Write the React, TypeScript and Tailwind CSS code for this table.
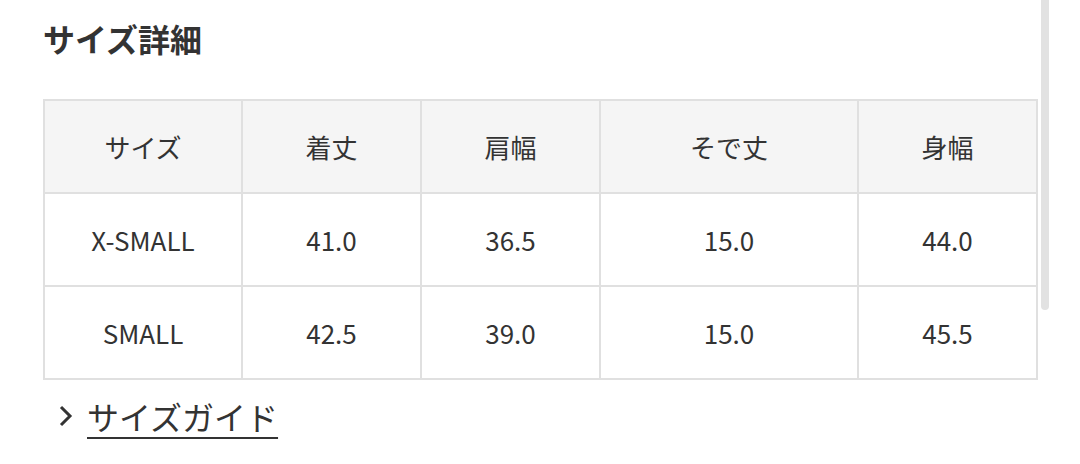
const headers = ['サイズ', '着丈', '肩幅', 'そで丈', '身幅']
const rows = [
  ['X-SMALL', '41.0', '36.5', '15.0', '44.0'],
  ['SMALL', '42.5', '39.0', '15.0', '45.5'],
]
const widths = ['w-[198px]', 'w-[179px]', 'w-[179px]', 'w-[258px]', 'w-[179px]']

export default function App() {
  return (
    <main
      className="relative h-[464px] w-[1080px] overflow-hidden bg-white text-[#333]"
      style={{ fontFamily: '"Noto Sans CJK JP", "Noto Sans", sans-serif' }}
    >
      <div className="pl-[43px] pt-[15px]">
        <h2 className="text-[32px] font-bold leading-[46px]">サイズ詳細</h2>
        <table className="mt-[38px] w-[994px] table-fixed border-collapse text-[26px]">
          <thead>
            <tr className="h-[93px] bg-[#f5f5f5]">
              {headers.map((h, i) => (
                <th key={h} className={`${widths[i]} border-2 border-[#e0e0e0] font-normal`}>
                  {h}
                </th>
              ))}
            </tr>
          </thead>
          <tbody>
            {rows.map((r) => (
              <tr key={r[0]} className="h-[93px]">
                {r.map((c, i) => (
                  <td key={i} className="border-2 border-[#e0e0e0] text-center">
                    {c}
                  </td>
                ))}
              </tr>
            ))}
          </tbody>
        </table>
        <a href="#" className="mt-[14px] ml-[14px] flex items-center gap-[12px] text-[32px] leading-[44px]">
          <svg width="18" height="24" viewBox="0 0 18 24" fill="none" stroke="#333" strokeWidth="3">
            <path d="M4 3l9 9-9 9" />
          </svg>
          <span className="underline decoration-2 underline-offset-[7px]">サイズガイド</span>
        </a>
      </div>
      <div className="absolute left-[1041px] top-0 h-[310px] w-[8px] rounded-b-full bg-[#e2e2e2]" />
    </main>
  )
}
